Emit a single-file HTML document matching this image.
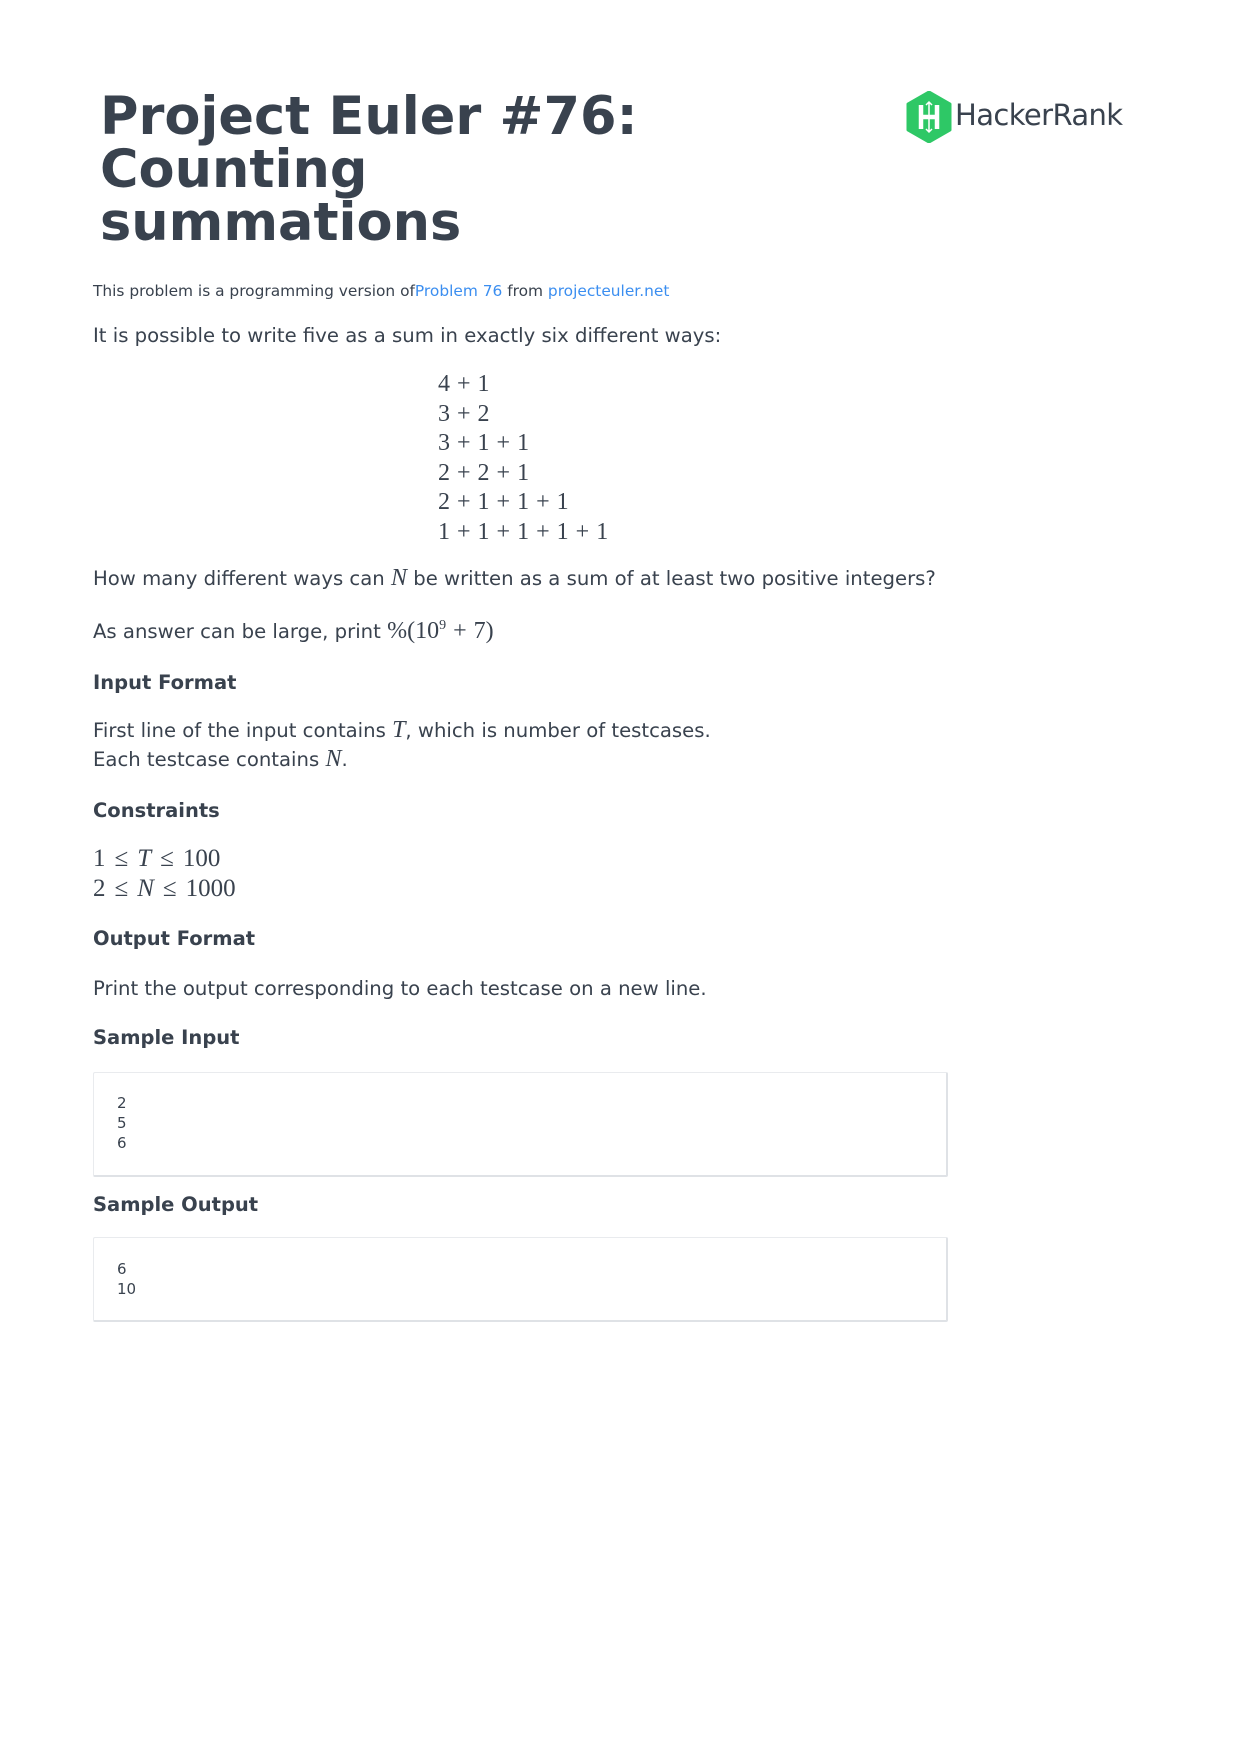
<!DOCTYPE html>
<html><head><meta charset="utf-8"><style>
html,body{margin:0;padding:0;background:#fff;}
body{width:1240px;height:1755px;position:relative;font-family:"DejaVu Sans","Liberation Sans",sans-serif;color:#39424e;}
.a{position:absolute;white-space:nowrap;}
.t{font-weight:bold;font-size:52.5px;line-height:53px;left:100px;top:90px;}
.p{font-size:19.65px;left:93px;}
.h{font-size:19.5px;font-weight:bold;left:93px;}
.m{font-family:"Liberation Serif","DejaVu Serif",serif;font-size:24px;}
.m b{font-weight:normal;padding:0 7px;}
.k b{padding:0 9px;}
.i{font-style:italic;}
a{color:#3b8ef0;text-decoration:none;}
.box{position:absolute;left:93px;width:852px;border:1px solid #e9ebee;border-right:2px solid #dfe2e6;border-bottom:2px solid #dfe2e6;border-radius:2px;background:#fff;}
.c{position:absolute;left:117px;font-size:15px;line-height:20px;}
</style></head><body>
<div class="a t">Project Euler #76:<br>Counting<br>summations</div>
<svg class="a" style="left:905px;top:91px" width="48" height="52" viewBox="0 0 48 52">
<polygon points="24,1 45,13 45,39 24,51 3,39 3,13" fill="#2ec866" stroke="#2ec866" stroke-width="3" stroke-linejoin="round"/>
<path d="M16 14v24M32 14v24M16 26h16" stroke="#fff" stroke-width="4.5" fill="none"/>
<path d="M24 11v30M21 14l3-3 3 3M21 38l3 3 3-3" stroke="#fff" stroke-width="1.5" fill="none"/>
</svg>
<div class="a" style="left:955px;top:98px;font-size:29px;color:#39424e;letter-spacing:-0.6px">HackerRank</div>
<div class="a" style="left:93px;top:282px;font-size:15.4px">This problem is a programming version of<a>Problem 76</a> from <a>projecteuler.net</a></div>
<div class="a p" style="top:324px">It is possible to write five as a sum in exactly six different ways:</div>
<div class="a m" style="left:438px;top:370px;line-height:29.6px">4<b>+</b>1<br>3<b>+</b>2<br>3<b>+</b>1<b>+</b>1<br>2<b>+</b>2<b>+</b>1<br>2<b>+</b>1<b>+</b>1<b>+</b>1<br>1<b>+</b>1<b>+</b>1<b>+</b>1<b>+</b>1</div>
<div class="a p" style="top:565px">How many different ways can <span class="m i">N</span> be written as a sum of at least two positive integers?</div>
<div class="a p" style="top:618px">As answer can be large, print <span class="m">%(10<sup style="font-size:14px">9</sup><b>+</b>7)</span></div>
<div class="a h" style="top:671px">Input Format</div>
<div class="a p" style="top:717px">First line of the input contains <span class="m i">T</span>, which is number of testcases.</div>
<div class="a p" style="top:746px">Each testcase contains <span class="m i">N</span>.</div>
<div class="a h" style="top:799px">Constraints</div>
<div class="a m k" style="left:93px;top:844px;line-height:30px;font-size:25px">1<b>≤</b><span class="i">T</span><b>≤</b>100<br>2<b>≤</b><span class="i">N</span><b>≤</b>1000</div>
<div class="a h" style="top:927px">Output Format</div>
<div class="a p" style="top:977px">Print the output corresponding to each testcase on a new line.</div>
<div class="a h" style="top:1026px">Sample Input</div>
<div class="box" style="top:1072px;height:102px"></div>
<div class="c" style="top:1093px">2<br>5<br>6</div>
<div class="a h" style="top:1193px">Sample Output</div>
<div class="box" style="top:1237px;height:82px"></div>
<div class="c" style="top:1259px">6<br>10</div>
</body></html>
